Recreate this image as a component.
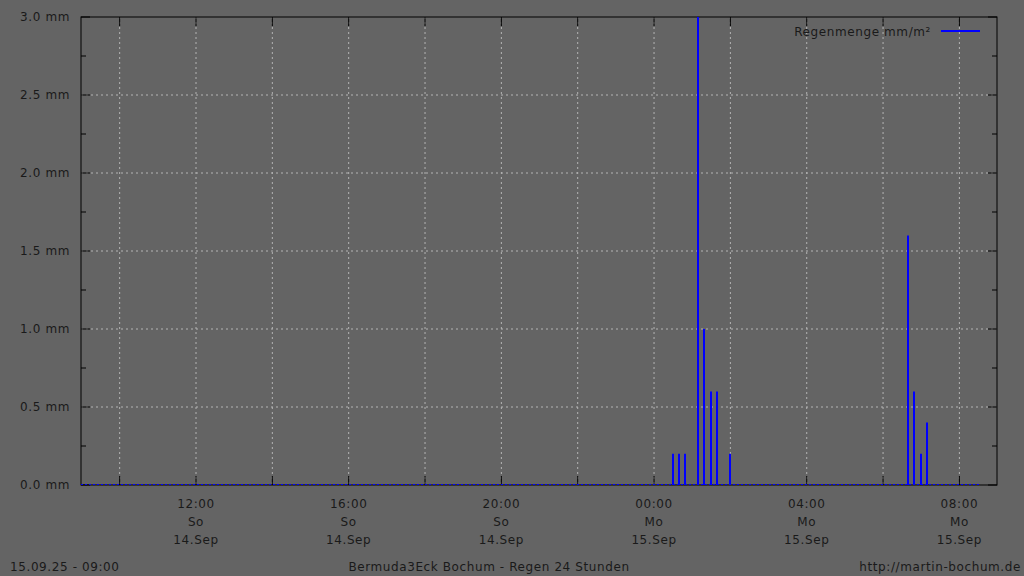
const L = 81
const R = 997
const T = 17
const B = 485
const xAt = (h: number) => 196 + (h - 12) * 38.17
const yAt = (v: number) => B - (v / 3) * (B - T)

const bars: [number, number][] = [
  [673, 0.2], [679, 0.2], [685, 0.2], [698, 3.0], [704, 1.0], [711, 0.6], [717, 0.6], [730, 0.2],
  [908, 1.6], [914, 0.6], [921, 0.2], [927, 0.4],
]

const labels = [
  { h: 12, t: '12:00', d: 'So', s: '14.Sep' },
  { h: 16, t: '16:00', d: 'So', s: '14.Sep' },
  { h: 20, t: '20:00', d: 'So', s: '14.Sep' },
  { h: 24, t: '00:00', d: 'Mo', s: '15.Sep' },
  { h: 28, t: '04:00', d: 'Mo', s: '15.Sep' },
  { h: 32, t: '08:00', d: 'Mo', s: '15.Sep' },
]

export default function App() {
  const grid = [10, 12, 14, 16, 18, 20, 22, 24, 26, 28, 30, 32]
  const yVals = [0, 0.5, 1, 1.5, 2, 2.5, 3]
  const yMinor = [0.25, 0.75, 1.25, 1.75, 2.25, 2.75]
  return (
    <div className="h-[576px] w-[1024px] bg-[#646464]">
      <svg width="1024" height="576" className="block" style={{ fontFamily: '"DejaVu Sans", sans-serif' }}>
        <g fill="#1a1a1a" fontSize="12" letterSpacing="0.6">
          {grid.map((h) => (
            <g key={h}>
              <line x1={xAt(h)} x2={xAt(h)} y1={T} y2={B} stroke="#b4b4b4" strokeDasharray="2 3" />
              <line x1={xAt(h)} x2={xAt(h)} y1={B} y2={B - 9} stroke="#000" />
              <line x1={xAt(h)} x2={xAt(h)} y1={T} y2={T + 9} stroke="#000" />
            </g>
          ))}
          {yVals.map((v) => (
            <g key={v}>
              {v > 0 && v < 3 && <line x1={L} x2={R} y1={yAt(v)} y2={yAt(v)} stroke="#b4b4b4" strokeDasharray="2 3" />}
              <line x1={L} x2={L + 9} y1={yAt(v)} y2={yAt(v)} stroke="#000" />
              <line x1={R} x2={R - 9} y1={yAt(v)} y2={yAt(v)} stroke="#000" />
              <text x={70} y={yAt(v) + 4} textAnchor="end">{v.toFixed(1)} mm</text>
            </g>
          ))}
          {yMinor.map((v) => (
            <g key={v}>
              <line x1={L} x2={L + 5} y1={yAt(v)} y2={yAt(v)} stroke="#000" />
              <line x1={R} x2={R - 5} y1={yAt(v)} y2={yAt(v)} stroke="#000" />
            </g>
          ))}
          <rect x={L} y={T} width={R - L} height={B - T} fill="none" stroke="#000" />
          <line x1={L} x2={980} y1={B - 0.5} y2={B - 0.5} stroke="#0000ff" strokeDasharray="2 2" />
          {bars.map(([x, v]) => (
            <line key={x} x1={x} x2={x} y1={B} y2={yAt(v)} stroke="#0000ff" strokeWidth="2" />
          ))}
          {labels.map((l) => (
            <g key={l.h} textAnchor="middle">
              <text x={xAt(l.h)} y={508}>{l.t}</text>
              <text x={xAt(l.h)} y={526}>{l.d}</text>
              <text x={xAt(l.h)} y={544}>{l.s}</text>
            </g>
          ))}
          <text x={931} y={36} textAnchor="end">Regenmenge mm/m²</text>
          <line x1={941} x2={980} y1={31} y2={31} stroke="#0000ff" strokeWidth="2" />
          <text x={10} y={571}>15.09.25 - 09:00</text>
          <text x={489} y={571} textAnchor="middle">Bermuda3Eck Bochum - Regen 24 Stunden</text>
          <text x={1021} y={571} textAnchor="end">http://martin-bochum.de</text>
        </g>
      </svg>
    </div>
  )
}
